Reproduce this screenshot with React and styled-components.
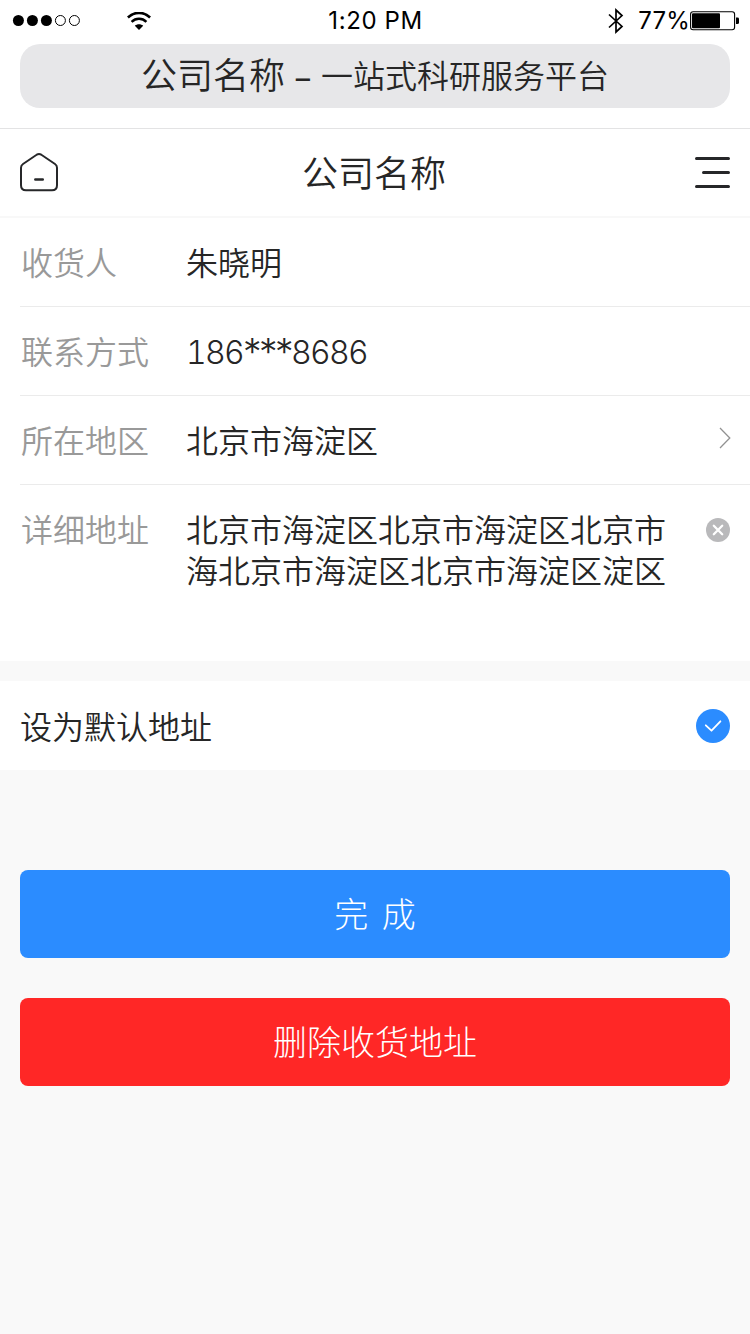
import { useState } from "react"
import styled, { createGlobalStyle } from "styled-components"

export default function App() {
    const [isDefault, setIsDefault] = useState(true)
    const [address, setAddress] = useState("北京市海淀区北京市海淀区北京市海北京市海淀区北京市海淀区淀区")

    return (
        <>
            <GlobalStyle />
            <StyledScreen>
                <StatusBar />

                <StyledBrowserBar>
                    <StyledSiteTitle>
                        <span>公司名称</span>
                        <StyledDash>–</StyledDash>
                        <small>一站式科研服务平台</small>
                    </StyledSiteTitle>
                </StyledBrowserBar>

                <StyledNav>
                    <HomeIcon />
                    <h1>公司名称</h1>
                    <MenuIcon />
                </StyledNav>

                <StyledForm>
                    <StyledRow>
                        <StyledLabel>收货人</StyledLabel>
                        <StyledValue>朱晓明</StyledValue>
                    </StyledRow>
                    <StyledRow>
                        <StyledLabel>联系方式</StyledLabel>
                        <StyledPhone>186<span>***</span>8686</StyledPhone>
                    </StyledRow>
                    <StyledRow>
                        <StyledLabel>所在地区</StyledLabel>
                        <StyledValue>北京市海淀区</StyledValue>
                        <ArrowIcon />
                    </StyledRow>
                    <StyledAddressRow>
                        <StyledLabel>详细地址</StyledLabel>
                        <StyledAddress>{address}</StyledAddress>
                        <ClearIcon onClick={() => setAddress("")} />
                    </StyledAddressRow>
                </StyledForm>

                <StyledDefaultRow onClick={() => setIsDefault(!isDefault)}>
                    <p>设为默认地址</p>
                    <CheckIcon checked={isDefault} />
                </StyledDefaultRow>

                <StyledActions>
                    <StyledButton $color="#2b8cff" $wordSpacing="6px">完 成</StyledButton>
                    <StyledButton $color="#ff2726">删除收货地址</StyledButton>
                </StyledActions>
            </StyledScreen>
        </>
    )
}

function StatusBar() {
    return (
        <StyledStatusBar>
            <StyledStatusSide>
                <svg width="70" height="14" viewBox="0 0 70 14">
                    {[0, 1, 2, 3, 4].map((i) => (
                        <circle key={i} cx={6.4 + i * 14} cy="6.5" r={i < 3 ? 5.5 : 5} fill={i < 3 ? "#000" : "none"} stroke="#000" strokeWidth={i < 3 ? 0 : 1} />
                    ))}
                </svg>
                <StyledWifi width="24" height="18" viewBox="0 0 24 18" fill="none" stroke="#000">
                    <path d="M0.9 5.5C7.2 -0.7 16.8 -0.7 23.1 5.5" strokeWidth="2.6" />
                    <path d="M4.6 9.8C8.8 5.8 15.2 5.8 19.4 9.8" strokeWidth="2.5" />
                    <path d="M12 18L7.8 13.7C10.2 11.7 13.8 11.7 16.2 13.7Z" fill="#000" stroke="none" />
                </StyledWifi>
            </StyledStatusSide>
            <StyledClock>1:20 PM</StyledClock>
            <StyledStatusSide $right>
                <StyledBluetooth width="16" height="26" viewBox="0 0 16 26" fill="none" stroke="#000" strokeWidth="1.7">
                    <path d="M1 6.5L14 18.5L8 24V2L14 7.5L1 19.5" />
                </StyledBluetooth>
                <span>77%</span>
                <svg width="49" height="20" viewBox="0 0 49 20">
                    <rect x="0.6" y="0.7" width="44" height="18" rx="2.5" fill="none" stroke="#000" strokeWidth="1.1" />
                    <rect x="2" y="2.2" width="28" height="15" rx="1" fill="#000" />
                    <path d="M46 6.6H47.5Q49 6.6 49 8V11.5Q49 13 47.5 13H46Z" fill="#000" />
                </svg>
            </StyledStatusSide>
        </StyledStatusBar>
    )
}

function HomeIcon() {
    return (
        <svg width="38" height="40" viewBox="0 0 38 40" fill="none" stroke="#262729" strokeWidth="2" strokeLinecap="round">
            <path d="M17 2.5Q19 1.5 21 2.5L35 12Q37 13.3 37 15.7V33.3Q37 38.3 32 38.3H6Q1 38.3 1 33.3V15.7Q1 13.3 3 12Z" />
            <path d="M15.3 27.5H22.8" strokeWidth="2.4" />
        </svg>
    )
}

function MenuIcon() {
    return (
        <svg width="35" height="34" viewBox="0 0 35 34" stroke="#262729" strokeWidth="3" strokeLinecap="round">
            <path d="M1.5 3.5H33.5M8.5 17.5H33.5M1.5 31.5H33.5" />
        </svg>
    )
}

function ArrowIcon() {
    return (
        <StyledArrow width="12" height="22" viewBox="0 0 12 22" fill="none" stroke="#929292" strokeWidth="1.3">
            <path d="M1 1L10.8 11L1 21" />
        </StyledArrow>
    )
}

function ClearIcon({ onClick }) {
    return (
        <StyledClear width="24" height="24" viewBox="0 0 24 24" onClick={onClick}>
            <circle cx="12" cy="12" r="12" fill="#b9b9bb" />
            <path d="M7.8 7.8L16.2 16.2M16.2 7.8L7.8 16.2" stroke="#fff" strokeWidth="2.3" strokeLinecap="round" />
        </StyledClear>
    )
}

function CheckIcon({ checked }) {
    return (
        <svg width="34" height="34" viewBox="0 0 34 34" fill="none">
            <circle cx="17" cy="17" r="17" fill={checked ? "#2b8cff" : "#d8d8d8"} />
            <path d="M9.8 16.3L15.5 21.7L24.4 12.3" stroke="#fff" strokeWidth="1.8" strokeLinecap="round" strokeLinejoin="round" />
        </svg>
    )
}


const GlobalStyle = createGlobalStyle`
*{
box-sizing: border-box;
}

body{
margin: 0;
background: #f9f9f9;
}

p, h1{
margin: 0;
font-weight: inherit;
}

svg{
display: block;
flex-shrink: 0;
}
`

const StyledScreen = styled.main`
width: 100%;
min-height: 1334px;

display: flex;
flex-direction: column;

background: #f9f9f9;
color: #262626;
font-family: 'Noto Sans CJK SC', sans-serif;
font-weight: 350;
font-size: 32px;
line-height: 40px;
`

const StyledStatusBar = styled.div`
height: 40px;
padding: 1px 11px 0 12px;

display: grid;
grid-template-columns: 1fr auto 1fr;
align-items: center;

background: #fff;
color: #000;
font-family: Inter, sans-serif;
font-weight: 400;
font-size: 24px;
line-height: 38px;
`

const StyledStatusSide = styled.div`
display: flex;
align-items: center;
justify-content: ${({ $right }) => ($right ? "flex-end" : "flex-start")};

span{
letter-spacing: 0.2px;
}
`

const StyledWifi = styled.svg`
margin-left: 45px;
`

const StyledBluetooth = styled.svg`
margin-right: 14px;
`

const StyledClock = styled.p`
letter-spacing: 0.6px;
`

const StyledBrowserBar = styled.header`
height: 89px;
padding: 4px 20px 20px;

background: #fff;
border-bottom: 1px solid #e3e3e4;
`

const StyledSiteTitle = styled.div`
height: 64px;
padding-bottom: 6px;

display: flex;
align-items: center;
justify-content: center;

background: #e7e7e9;
border-radius: 20px;

font-size: 36px;

small{
padding-top: 2px;
font-size: 32px;
}
`

const StyledDash = styled.span`
width: 36px;
padding-top: 4px;

text-align: center;
font-weight: 500;
font-size: 32px;
`

const StyledNav = styled.nav`
height: 89px;
padding: 0 20px 2px;

display: flex;
align-items: center;
justify-content: space-between;

background: #fff;
border-bottom: 2px solid #f8f8f8;

h1{
margin-left: -5px;
padding-bottom: 1px;
font-size: 36px;
}
`

const StyledForm = styled.section`
height: 443px;
padding-left: 21px;

background: #fff;
`

const StyledRow = styled.div`
height: 89px;
margin-left: -1px;
padding: 0 19px 2px 1px;

display: flex;
align-items: center;

border-bottom: 1px solid #ebebeb;
`

const StyledAddressRow = styled.div`
padding: 23px 20px 0 0;

display: flex;
align-items: flex-start;
`

const StyledLabel = styled.p`
width: 165px;
flex-shrink: 0;

color: #999;
font-weight: 350;
`

const StyledValue = styled.p`
flex: 1;
`

const StyledPhone = styled(StyledValue)`
padding-top: 5px;

font-family: Inter, sans-serif;
font-weight: 300;
font-size: 32px;
font-variant-numeric: tabular-nums;
letter-spacing: -1.7px;

span{
font-size: 37px;
font-variant-numeric: normal;
letter-spacing: -2.5px;
line-height: 0;
vertical-align: -1px;
}
`

const StyledAddress = styled.p`
width: 480px;
line-height: 41px;
`

const StyledArrow = styled.svg`
margin-bottom: 3px;
`

const StyledClear = styled.svg`
margin: 10px 0 0 auto;
`

const StyledDefaultRow = styled.section`
height: 89px;
margin-top: 20px;
padding: 0 20px;

display: flex;
align-items: center;
justify-content: space-between;

background: #fff;

p{
padding-bottom: 2px;
}
`

const StyledActions = styled.div`
padding: 100px 20px 0;

display: flex;
flex-direction: column;
gap: 40px;
`

const StyledButton = styled.button`
height: 88px;
padding: 0 0 3px;

border: none;
border-radius: 8px;
background: ${({ $color }) => $color};

color: #fff;
font-family: inherit;
font-weight: 300;
font-size: 34px;
word-spacing: ${({ $wordSpacing }) => $wordSpacing || "normal"};
`
